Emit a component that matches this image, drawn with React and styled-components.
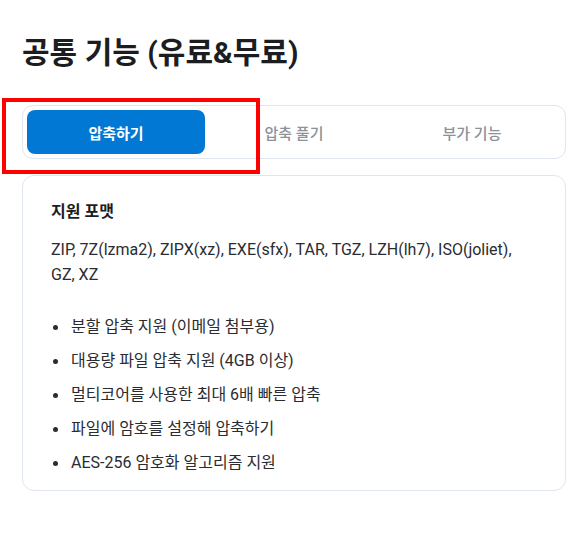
import React from 'react';
import styled, { createGlobalStyle } from 'styled-components';

const GlobalStyle = createGlobalStyle`
    body {
        margin: 0;
        background: #ffffff;
        font-family: Roboto, "Noto Sans CJK KR", sans-serif;
        color: #1f2126;
    }
`;

const formats = 'ZIP, 7Z(lzma2), ZIPX(xz), EXE(sfx), TAR, TGZ, LZH(lh7), ISO(joliet), GZ, XZ';

const features = [
    '분할 압축 지원 (이메일 첨부용)',
    '대용량 파일 압축 지원 (4GB 이상)',
    '멀티코어를 사용한 최대 6배 빠른 압축',
    '파일에 암호를 설정해 압축하기',
    'AES-256 암호화 알고리즘 지원',
];

const tabs = ['압축하기', '압축 풀기', '부가 기능'];

export default function App() {
    return (
        <Page>
            <GlobalStyle />
            <Title>공통 기능 (유료&amp;무료)</Title>
            <TabWrap>
                <TabBar>
                    {tabs.map((t, i) => (
                        <Tab key={t} $active={i === 0}>{t}</Tab>
                    ))}
                </TabBar>
                <Highlight />
            </TabWrap>
            <Card>
                <CardTitle>지원 포맷</CardTitle>
                <Formats>{formats}</Formats>
                <FeatureList>
                    {features.map((f) => (
                        <Feature key={f}>{f}</Feature>
                    ))}
                </FeatureList>
            </Card>
        </Page>
    );
}

const Page = styled.div`
    width: 544px;
    padding: 33px 12px 40px 22px;
`;

const Title = styled.h2`
    margin: 0 0 33px;
    font-size: 30px;
    line-height: 39px;
    font-weight: 700;
    color: #1c1d21;
`;

const TabWrap = styled.div`
    position: relative;
    margin-bottom: 16px;
`;

const TabBar = styled.div`
    display: grid;
    grid-template-columns: repeat(3, 1fr);
    padding: 4px;
    border: 1px solid #dfe6ef;
    border-radius: 11px;
`;

const Tab = styled.div`
    height: 44px;
    display: flex;
    align-items: center;
    justify-content: center;
    border-radius: 8px;
    font-size: 15px;
    font-weight: ${(p) => (p.$active ? 700 : 500)};
    color: ${(p) => (p.$active ? '#ffffff' : '#8d9198')};
    background: ${(p) => (p.$active ? '#0078d4' : 'transparent')};
`;

const Highlight = styled.div`
    position: absolute;
    left: -20px;
    top: -7px;
    width: 250px;
    height: 68px;
    border: 4px solid #ff0000;
    pointer-events: none;
`;

const Card = styled.div`
    border: 1px solid #dfe6ef;
    border-radius: 12px;
    padding: 24px 44px 15px 28px;
`;

const CardTitle = styled.h3`
    margin: 0 0 13px;
    font-size: 16px;
    line-height: 24px;
    font-weight: 700;
    color: #1c1d21;
`;

const Formats = styled.p`
    margin: 0 0 28px;
    font-size: 16px;
    line-height: 25px;
    color: #2a2c31;
`;

const FeatureList = styled.ul`
    list-style: none;
    margin: 0;
    padding: 0;
    display: flex;
    flex-direction: column;
    gap: 10px;
`;

const Feature = styled.li`
    position: relative;
    padding-left: 20px;
    font-size: 16px;
    line-height: 24px;
    color: #2a2c31;

    &::before {
        content: '';
        position: absolute;
        left: 2px;
        top: 10px;
        width: 5px;
        height: 5px;
        border-radius: 50%;
        background: #2a2c31;
    }
`;
